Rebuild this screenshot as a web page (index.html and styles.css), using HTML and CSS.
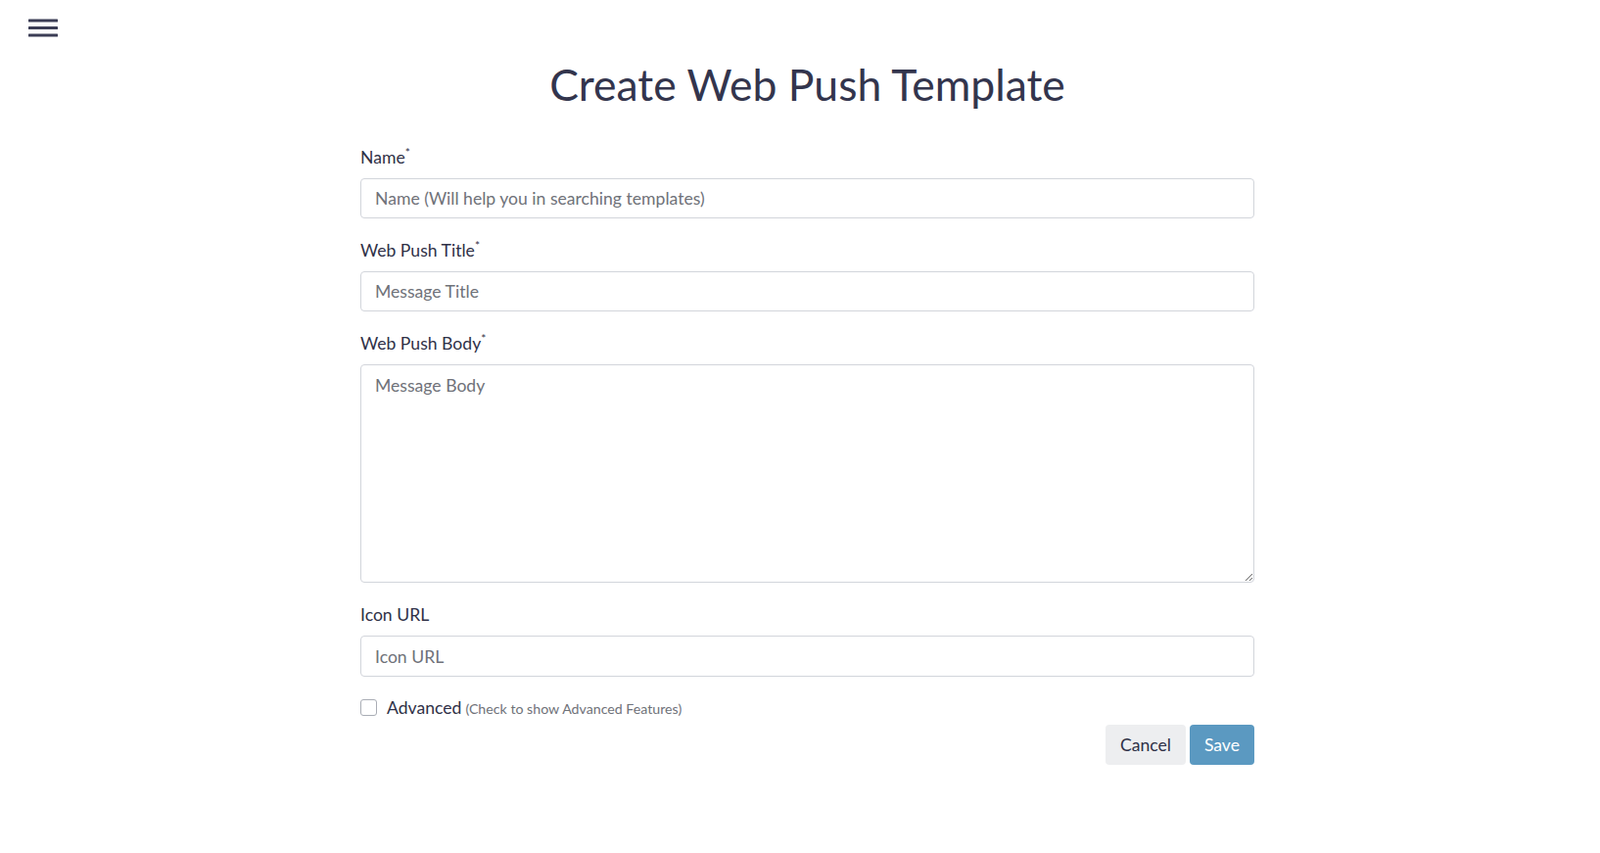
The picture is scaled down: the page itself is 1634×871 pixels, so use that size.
FILE: index.html
```html
<!DOCTYPE html>
<html lang="en">
<head>
<meta charset="utf-8">
<title>Create Web Push Template</title>
<link rel="stylesheet" href="styles.css">
</head>
<body>
<div class="topbar">
  <button class="menu-toggle" aria-label="Menu">
    <svg width="30" height="19" viewBox="0 0 30 19"><rect x="0" y="0.5" width="30" height="3" rx="0.5" fill="#3b3d55"/><rect x="0" y="8" width="30" height="3" rx="0.5" fill="#3b3d55"/><rect x="0" y="15.5" width="30" height="3" rx="0.5" fill="#3b3d55"/></svg>
  </button>
</div>
<main class="main">
  <h1 class="page-title">Create Web Push Template</h1>
  <form class="form">
    <div class="field">
      <label class="label">Name<sup>*</sup></label>
      <input class="input" type="text" placeholder="Name (Will help you in searching templates)">
    </div>
    <div class="field">
      <label class="label">Web Push Title<sup>*</sup></label>
      <input class="input" type="text" placeholder="Message Title">
    </div>
    <div class="field">
      <label class="label">Web Push Body<sup>*</sup></label>
      <textarea class="input textarea" placeholder="Message Body"></textarea>
    </div>
    <div class="field">
      <label class="label">Icon URL</label>
      <input class="input input-tall" type="text" placeholder="Icon URL">
    </div>
    <label class="check">
      <input type="checkbox" class="checkbox">
      <span class="check-text">Advanced</span>
      <span class="check-hint">(Check to show Advanced Features)</span>
    </label>
    <div class="actions">
      <button type="button" class="btn btn-cancel">Cancel</button>
      <button type="button" class="btn btn-save">Save</button>
    </div>
  </form>
</main>
</body>
</html>
```
FILE: styles.css
```css
* { box-sizing: border-box; }
html, body { margin: 0; padding: 0; background: #fff; }
body {
  font-family: Lato, "Open Sans", Arial, sans-serif;
  color: #2f3147;
  font-size: 17.6px;
}
.topbar {
  height: 40px;
  padding: 19px 0 0 29px;
}
.menu-toggle {
  display: block;
  border: 0;
  background: none;
  padding: 0;
  margin: 0;
  line-height: 0;
  cursor: pointer;
}
.main {
  padding-left: 15px;
}
.page-title {
  margin: 18px 0 0;
  font-size: 44.5px;
  line-height: 56px;
  font-weight: 400;
  text-align: center;
  color: #33354d;
}
.form {
  width: 913px;
  margin: 35px auto 0;
}
.field {
  margin-bottom: 21px;
}
.label {
  display: block;
  font-size: 17.6px;
  line-height: 24px;
  margin-bottom: 9px;
  color: #2f3147;
}
.label sup {
  font-size: 12px;
  line-height: 0;
  vertical-align: 7px;
  color: #2f3147;
}
.input {
  display: block;
  width: 100%;
  height: 41px;
  margin: 0;
  padding: 0 14px;
  font-family: inherit;
  font-size: 17.6px;
  color: #333;
  border: 1px solid #d2d5db;
  border-radius: 4px;
  background: #fff;
  outline: none;
}
.input-tall { height: 42px; }
.input::placeholder { color: #6f7279; }
.textarea {
  height: 223px;
  padding: 9px 14px;
  resize: vertical;
  line-height: 24px;
}
.check {
  display: flex;
  align-items: center;
  margin-top: 19px;
  height: 20px;
}
.checkbox {
  appearance: none;
  -webkit-appearance: none;
  width: 17px;
  height: 17px;
  margin: 0 10px 0 0;
  border: 1px solid #a9adb5;
  border-radius: 3px;
  background: #fff;
}
.check-text {
  font-size: 17.6px;
  color: #2f3147;
}
.check-hint {
  margin-left: 4px;
  font-size: 14.2px;
  color: #6f7279;
  padding-top: 3px;
}
.actions {
  display: flex;
  justify-content: flex-end;
  gap: 4px;
  margin-top: 8px;
}
.btn {
  height: 41px;
  padding: 0 15px;
  border: 0;
  border-radius: 4px;
  font-family: inherit;
  font-size: 17.6px;
  cursor: pointer;
}
.btn-cancel {
  background: #edeef0;
  color: #2f3147;
}
.btn-save {
  background: #5b99c1;
  color: #fff;
}
```
